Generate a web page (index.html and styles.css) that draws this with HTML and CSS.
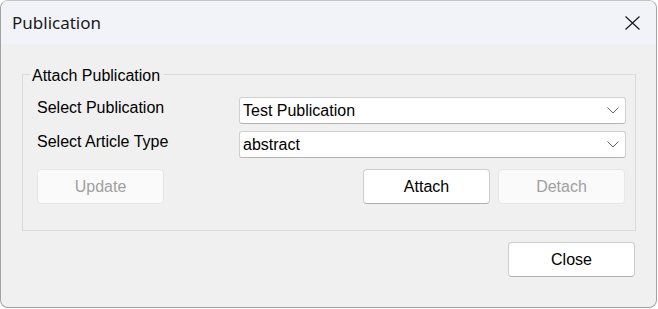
FILE: index.html
```html
<!DOCTYPE html>
<html>
<head>
<meta charset="utf-8">
<link rel="stylesheet" href="styles.css">
</head>
<body>
<div class="window">
  <div class="titlebar">
    <span class="title">Publication</span>
    <svg class="close-x" width="15" height="14" viewBox="0 0 15 14"><path d="M0.5 0.5 L14.5 13.5 M14.5 0.5 L0.5 13.5" stroke="#1a1a1a" stroke-width="1.2" fill="none"/></svg>
  </div>
  <div class="content">
    <fieldset class="group">
      <legend class="legend">Attach Publication</legend>
      <div class="form">
        <label class="label">Select Publication</label>
        <div class="combo"><span class="combo-text">Test Publication</span><svg class="chev" width="12" height="7" viewBox="0 0 12 7"><polyline points="0.5,0.5 6,6 11.5,0.5" stroke="#666" stroke-width="1" fill="none"/></svg></div>
        <label class="label">Select Article Type</label>
        <div class="combo"><span class="combo-text">abstract</span><svg class="chev" width="12" height="7" viewBox="0 0 12 7"><polyline points="0.5,0.5 6,6 11.5,0.5" stroke="#666" stroke-width="1" fill="none"/></svg></div>
      </div>
      <div class="actions">
        <button class="btn" disabled>Update</button>
        <span class="spacer"></span>
        <button class="btn">Attach</button>
        <button class="btn btn-last" disabled>Detach</button>
      </div>
    </fieldset>
    <div class="footer">
      <button class="btn btn-close">Close</button>
    </div>
  </div>
</div>
</body>
</html>
```

FILE: styles.css
```css
html, body {
  margin: 0;
  padding: 0;
  background: #ffffff;
}
.window {
  width: 657px;
  height: 308px;
  box-sizing: border-box;
  border: 1px solid #a2a2a2;
  border-top-color: #c6c6c6;
  border-radius: 8px;
  overflow: hidden;
  background: #f0f0f0;
  display: flex;
  flex-direction: column;
  font-family: "Liberation Sans", Arial, sans-serif;
  font-size: 16px;
  color: #000;
}
.titlebar {
  height: 43px;
  flex: none;
  background: #f2f3f9;
  display: flex;
  align-items: center;
  justify-content: space-between;
  padding: 0 16px 0 11px;
}
.title {
  font-family: "Noto Sans", sans-serif;
  font-size: 17px;
  line-height: 22px;
  color: #1a1a1a;
}
.close-x {
  display: block;
}
.content {
  padding: 20px 20px 0 21px;
}
.group {
  margin: 0;
  min-inline-size: 0;
  border: 1px solid #dadada;
  padding: 12px 9px 26px 14px;
}
.legend {
  margin-left: -7px;
  padding: 3px 4px 0 2px;
  line-height: 18px;
}
.form {
  display: grid;
  grid-template-columns: 202px 1fr;
  row-gap: 7px;
}
.label {
  padding-top: 2px;
  line-height: 18px;
}
.combo {
  height: 27px;
  box-sizing: border-box;
  background: #ffffff;
  border: 1px solid #cfcfcf;
  border-bottom-color: #b4b4b4;
  border-radius: 3px;
  display: flex;
  align-items: center;
  justify-content: space-between;
  padding: 0 6px 0 3px;
}
.combo-text {
  line-height: 18px;
}
.chev {
  display: block;
}
.actions {
  display: flex;
  margin-top: 11px;
  gap: 8px;
}
.spacer {
  flex: 1;
}
.btn {
  width: 127px;
  height: 35px;
  box-sizing: border-box;
  background: #ffffff;
  border: 1px solid #cccccc;
  border-bottom-color: #b0b0b0;
  border-radius: 4px;
  font-family: "Liberation Sans", Arial, sans-serif;
  font-size: 16px;
  color: #000;
  padding: 0;
}
.btn:disabled {
  background: #fafafa;
  border-color: #e6e6e6;
  color: #a0a0a0;
}
.btn-last {
  margin-right: 1px;
}
.footer {
  display: flex;
  justify-content: flex-end;
  margin-top: 11px;
  padding-right: 1px;
}
```
